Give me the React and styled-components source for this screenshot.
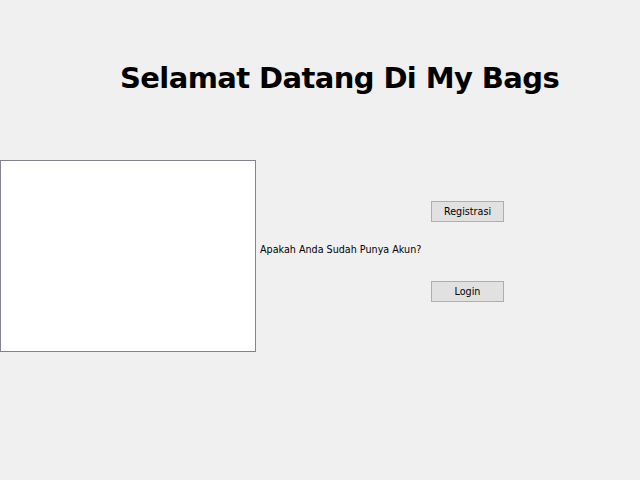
import styled, { createGlobalStyle } from 'styled-components'

const Global = createGlobalStyle`
  html, body {
    margin: 0;
    padding: 0;
    background: #f0f0f0;
  }
`

const Frame = styled.div`
  width: 640px;
  height: 480px;
  background: #f0f0f0;
  font-family: "DejaVu Sans", Tahoma, sans-serif;
  display: flex;
  flex-direction: column;
`

const Header = styled.div`
  height: 160px;
  padding-left: 120px;
  box-sizing: border-box;
`

const Title = styled.h1`
  margin: 0;
  padding-top: 58px;
  font-size: 29px;
  line-height: 40px;
  font-weight: bold;
  color: #000;
  letter-spacing: -0.6px;
`

const Content = styled.div`
  display: grid;
  grid-template-columns: 256px 175px 73px;
`

const Picture = styled.div`
  width: 256px;
  height: 192px;
  box-sizing: border-box;
  background: #fff;
  border: 1px solid #82828e;
`

const Question = styled.span`
  margin: 83px 0 0 4px;
  font-size: 9.6px;
  line-height: 13px;
  color: #000;
  white-space: nowrap;
`

const Buttons = styled.div`
  display: flex;
  flex-direction: column;
  gap: 59px;
  padding-top: 41px;
`

const Button = styled.button`
  width: 73px;
  height: 21px;
  padding: 0;
  box-sizing: border-box;
  background: #e1e1e1;
  border: 1px solid #adadad;
  font-family: "DejaVu Sans", Tahoma, sans-serif;
  font-size: 9.6px;
  color: #000;
`

export default function App() {
  return (
    <Frame>
      <Global />
      <Header>
        <Title>Selamat Datang Di My Bags</Title>
      </Header>
      <Content>
        <Picture />
        <Question>Apakah Anda Sudah Punya Akun?</Question>
        <Buttons>
          <Button>Registrasi</Button>
          <Button>Login</Button>
        </Buttons>
      </Content>
    </Frame>
  )
}
